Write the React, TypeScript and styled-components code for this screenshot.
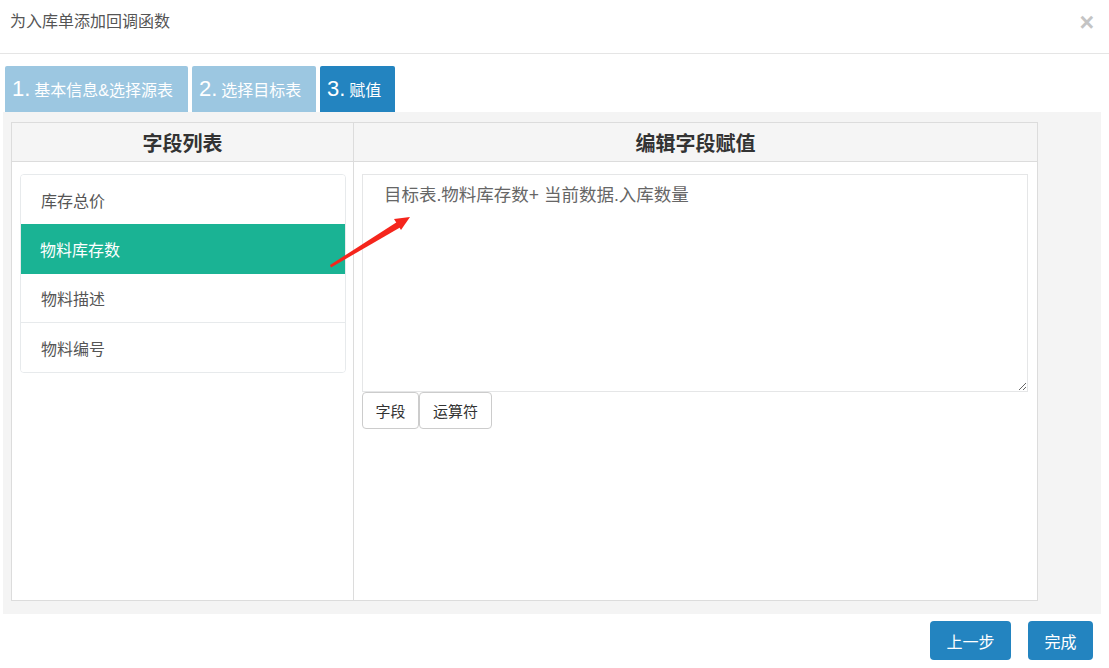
import React from "react";
import styled, { createGlobalStyle } from "styled-components";

const Global = createGlobalStyle`
  html, body { margin: 0; padding: 0; background: #fff; }
  body { font-family: "Liberation Sans", "Noto Sans CJK SC", sans-serif; color: #333; }
  * { box-sizing: border-box; }
`;

const Page = styled.div`
  width: 1109px;
  height: 668px;
  position: relative;
  overflow: hidden;
`;

const Header = styled.div`
  height: 54px;
  border-bottom: 1px solid #e5e5e5;
  display: flex;
  align-items: flex-start;
  justify-content: space-between;
  padding: 11px 15px 0 10px;
`;

const Title = styled.div`
  font-size: 16px;
  color: #555;
  line-height: 22px;
`;

const Close = styled.div`
  font-size: 25px;
  font-weight: bold;
  color: #c4c4c4;
  line-height: 18px;
  margin-top: 2px;
`;

const Steps = styled.div`
  display: flex;
  gap: 4px;
  padding: 12px 0 0 5px;
`;

const Step = styled.div<{ $active?: boolean; $w: number }>`
  width: ${(p) => p.$w}px;
  height: 46px;
  background: ${(p) => (p.$active ? "#2384c0" : "#9cc7e1")};
  color: #fff;
  display: flex;
  align-items: center;
  padding-left: 7px;
  border-radius: 2px 2px 0 0;
  font-size: 16px;
`;

const StepNum = styled.span`
  font-size: 22px;
  margin-right: 4px;
  font-family: "Liberation Sans", sans-serif;
`;

const Gray = styled.div`
  margin: 0 8px 0 3px;
  background: #f4f4f4;
  padding: 10px 63px 13px 8px;
`;

const Table = styled.div`
  border: 1px solid #dcdcdc;
  background: #fff;
  height: 479px;
  display: grid;
  grid-template-columns: 342px 1fr;
  grid-template-rows: 39px 1fr;
  position: relative;
`;

const HeadCell = styled.div<{ $last?: boolean }>`
  background: #f5f5f5;
  border-bottom: 1px solid #dcdcdc;
  border-right: ${(p) => (p.$last ? "none" : "1px solid #dcdcdc")};
  display: flex;
  align-items: center;
  justify-content: center;
  font-size: 20px;
  font-weight: bold;
  color: #333;
`;

const LeftCell = styled.div`
  border-right: 1px solid #dcdcdc;
  padding: 12px 7px 0 8px;
`;

const List = styled.div`
  border: 1px solid #e7eaec;
  border-radius: 4px;
  overflow: hidden;
`;

const Item = styled.div<{ $active?: boolean; $h: number; $line?: boolean }>`
  height: ${(p) => p.$h}px;
  display: flex;
  align-items: center;
  padding-left: 20px;
  font-size: 16px;
  color: ${(p) => (p.$active ? "#fff" : "#555")};
  background: ${(p) => (p.$active ? "#1ab394" : "#fff")};
  border-top: ${(p) => (p.$line ? "1px solid #e7eaec" : "none")};
  margin: ${(p) => (p.$active ? "0 -1px" : "0")};
`;

const RightCell = styled.div`
  padding: 12px 9px 0 8px;
`;

const TextArea = styled.textarea`
  display: block;
  width: 100%;
  height: 218px;
  border: 1px solid #e5e6e7;
  padding: 7px 21px;
  font-family: "Liberation Sans", "Noto Sans CJK SC", sans-serif;
  font-size: 17.5px;
  color: #666;
  line-height: 26px;
  resize: vertical;
  outline: none;
`;

const BtnRow = styled.div`
  display: flex;
`;

const SmallBtn = styled.button<{ $w: number }>`
  width: ${(p) => p.$w}px;
  height: 37px;
  border: 1px solid #ccc;
  border-radius: 4px;
  background: #fff;
  font-family: "Liberation Sans", "Noto Sans CJK SC", sans-serif;
  font-size: 15px;
  color: #333;
  padding: 0;
`;

const Footer = styled.div`
  display: flex;
  justify-content: flex-end;
  gap: 17px;
  padding: 7px 16px 0 0;
`;

const PrimaryBtn = styled.button<{ $w: number }>`
  width: ${(p) => p.$w}px;
  height: 39px;
  border: none;
  border-radius: 4px;
  background: #2384c0;
  color: #fff;
  font-family: "Liberation Sans", "Noto Sans CJK SC", sans-serif;
  font-size: 16px;
  padding: 0;
`;

const Arrow = styled.svg`
  position: absolute;
  left: 318px;
  top: 90px;
  pointer-events: none;
`;

export default function App() {
  return (
    <Page>
      <Global />
      <Header>
        <Title>为入库单添加回调函数</Title>
        <Close>×</Close>
      </Header>
      <Steps>
        <Step $w={183}>
          <StepNum>1.</StepNum>基本信息&amp;选择源表
        </Step>
        <Step $w={124}>
          <StepNum>2.</StepNum>选择目标表
        </Step>
        <Step $w={75} $active>
          <StepNum>3.</StepNum>赋值
        </Step>
      </Steps>
      <Gray>
        <Table>
          <HeadCell>字段列表</HeadCell>
          <HeadCell $last>编辑字段赋值</HeadCell>
          <LeftCell>
            <List>
              <Item $h={49}>库存总价</Item>
              <Item $h={50} $active>物料库存数</Item>
              <Item $h={48}>物料描述</Item>
              <Item $h={50} $line>物料编号</Item>
            </List>
          </LeftCell>
          <RightCell>
            <TextArea defaultValue="目标表.物料库存数+ 当前数据.入库数量" />
            <BtnRow>
              <SmallBtn $w={57}>字段</SmallBtn>
              <SmallBtn $w={73}>运算符</SmallBtn>
            </BtnRow>
          </RightCell>
          <Arrow width="90" height="60" viewBox="0 0 90 60">
            <polygon points="0,52 1,54.5 70,14.5 67,9" fill="#f5251c" />
            <polygon points="80,4 64,6 71,17" fill="#f5251c" />
          </Arrow>
        </Table>
      </Gray>
      <Footer>
        <PrimaryBtn $w={81}>上一步</PrimaryBtn>
        <PrimaryBtn $w={65}>完成</PrimaryBtn>
      </Footer>
    </Page>
  );
}
